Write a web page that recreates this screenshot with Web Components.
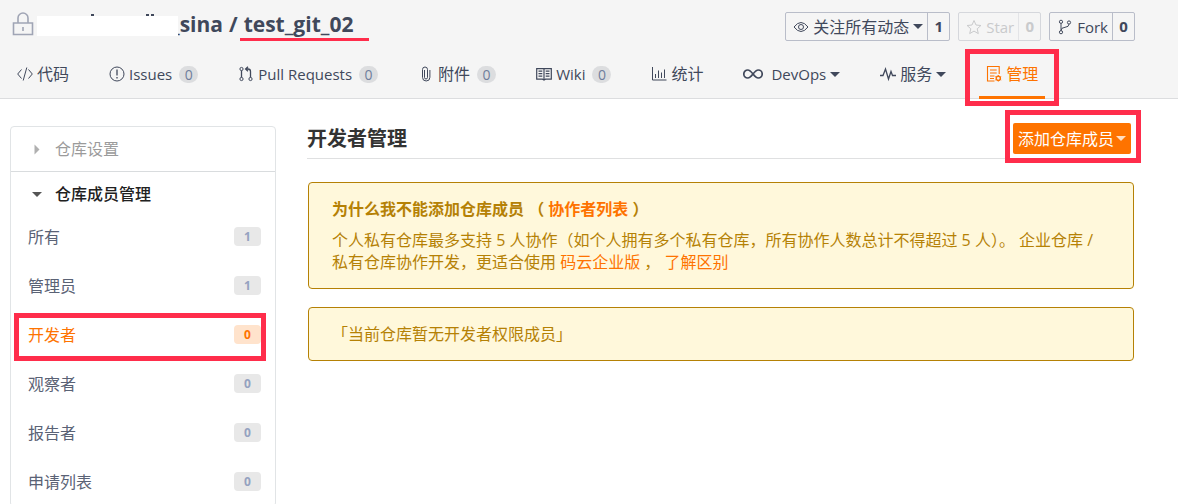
<!DOCTYPE html>
<html lang="zh-CN">
<head>
<meta charset="utf-8">
<title>test_git_02 - 开发者管理</title>
<style>
  body {
    margin: 0;
    height: 100vh;
    overflow: hidden;
    background: #fff;
    color: #40485b;
    font: 16px/22px "Open Sans", "Noto Sans CJK SC", sans-serif;
  }

  a {
    color: #fe7300;
    text-decoration: none;
  }

  p {
    margin: 0;
  }
</style>
</head>
<body>
  <repo-page>
    <repo-header slot="header">
      <repo-title slot="title" owner="_sina" name="test_git_02"></repo-title>
      <repo-action slot="actions" icon="eye" count="1" menu>关注所有动态</repo-action>
      <repo-action slot="actions" icon="star" count="0" lang="en" disabled>Star</repo-action>
      <repo-action slot="actions" icon="fork" count="0" lang="en">Fork</repo-action>
      <nav-tab icon="code">代码</nav-tab>
      <nav-tab icon="issue" count="0" lang="en">Issues</nav-tab>
      <nav-tab icon="pull" count="0" lang="en">Pull Requests</nav-tab>
      <nav-tab icon="clip" count="0">附件</nav-tab>
      <nav-tab icon="book" count="0" lang="en">Wiki</nav-tab>
      <nav-tab icon="chart">统计</nav-tab>
      <nav-tab icon="infinity" lang="en" menu>DevOps</nav-tab>
      <nav-tab icon="pulse" menu>服务</nav-tab>
      <nav-tab icon="manage" active>管理</nav-tab>
    </repo-header>

    <side-menu slot="side">
      <side-heading>仓库设置</side-heading>
      <side-heading open>仓库成员管理</side-heading>
      <side-item count="1">所有</side-item>
      <side-item count="1">管理员</side-item>
      <side-item count="0" active>开发者</side-item>
      <side-item count="0">观察者</side-item>
      <side-item count="0">报告者</side-item>
      <side-item count="0">申请列表</side-item>
    </side-menu>

    <page-heading>开发者管理<add-button slot="action">添加仓库成员</add-button></page-heading>
    <notice-box>
      <span slot="title">为什么我不能添加仓库成员 （ <a href="#">协作者列表</a> ）</span>
      <p>
        <span>个人私有仓库最多支持 5 人协作（如个人拥有多个私有仓库，所有协作人数总计不得超过 5 人）。 企业仓库 /</span>
        <span>私有仓库协作开发，更适合使用</span>
        <a href="#">码云企业版</a> ， <a href="#">了解区别</a>
      </p>
    </notice-box>
    <notice-box>
      <p>「当前仓库暂无开发者权限成员」</p>
    </notice-box>
  </repo-page>

<script>
  const icons = {
    lock: ['0 0 22 24', '<path d="M6 11V6a5 5 0 0 1 10 0v5M1.5 11h19v11.5h-19zM11 15v4" stroke="#a0a5b5" stroke-width="1.6"/>'],
    code: ['0 0 16 16', '<path d="M4.5 3.5.7 8l3.8 4.5M11.5 3.5 15.3 8l-3.8 4.5M9.8 1.5 6.2 14.5"/>'],
    issue: ['0 0 16 16', '<circle cx="8" cy="8" r="7"/><path d="M8 3.5v6M8 11v1.5" stroke-width="1.3"/>'],
    pull: ['0 0 16 16', '<circle cx="3.5" cy="3" r="1.6"/><circle cx="3.5" cy="13" r="1.6"/><circle cx="12.5" cy="13" r="1.6"/><path d="M3.5 4.6v6.8M12.5 11.4V5.5q0-2.5-2.5-2.5H8M10 .8 7.6 3 10 5.2" stroke-width="1.3"/>'],
    clip: ['0 0 16 16', '<path d="M6.5 4v7.5a1.5 1.5 0 0 0 3 0V3.5a2.5 2.5 0 0 0-5 0v7.8a3.7 3.7 0 0 0 7.4 0V4"/>'],
    book: ['0 0 16 16', '<path d="M.7 2.6h14.6v10.6H9.5L8 14l-1.5-.8H.7zM8 2.6V14M2.5 5.2h3.8M2.5 7.7h3.8M2.5 10.2h3.8M9.7 5.2h3.8M9.7 7.7h3.8M9.7 10.2h3.8" stroke-width="1.2"/>'],
    chart: ['0 0 16 16', '<path d="M1.5 1v13h14M4.5 12V8M7.5 12V4.5M10.5 12V6.5M13.5 12V3.5"/>'],
    infinity: ['0 0 20 16', '<path d="M10 8C7.5 4.8 6.5 4 4.8 4a4 4 0 0 0 0 8C6.5 12 7.5 11.2 10 8s3.5-4 5.2-4a4 4 0 0 1 0 8C13.5 12 12.5 11.2 10 8z" stroke-width="1.7"/>'],
    pulse: ['0 0 16 16', '<path d="M0 9.5h3L5.5 3l3 10L11 5.5l1.5 4H16" stroke-width="1.3"/>'],
    manage: ['0 0 16 16', '<path d="M8.5 15h-7V.5h11.7V8M4 4h6.7M4 7h6.7M4 10h4.5M4 12.5h4" stroke-width="1.1"/><circle cx="12.3" cy="12.3" r="2.1" stroke-width="1.4"/><path d="M12.3 9v1M12.3 14.6v1M9.4 10.6l.9.5M14.3 13.5l.9.5M9.4 14l.9-.5M14.3 11.1l.9-.5"/>'],
    eye: ['0 0 16 16', '<path d="M1 8q7-9 14 0-7 9-14 0z"/><circle cx="8" cy="8" r="2.5"/>'],
    star: ['0 0 16 16', '<path d="m8 1.500 2 4.500 4.900.5-3.700 3.300 1.100 4.800L8 12.100l-4.300 2.500 1.100-4.800L1.100 6.500 6 6z"/>'],
    fork: ['0 0 16 16', '<circle cx="4" cy="2.8" r="1.6"/><circle cx="12" cy="3.5" r="1.6"/><circle cx="4" cy="13.2" r="1.6"/><path d="M4 4.4v7.2M12 5.1Q12 8 8 8.3T4 11.5"/>']
  };

  // Small helper: fill an open shadow root from a string
  function paint(element, html) {
    element.attachShadow({ mode: 'open' }).innerHTML = html;
  }

  class UiIcon extends HTMLElement {
    connectedCallback() {
      const [box, shapes] = icons[this.getAttribute('name')];
      const [, , width, height] = box.split(' ');
      paint(this, `
        <style>
          :host { display: block; flex: none; }
          :host([name="infinity"]) { margin-right: 4px; }
          svg { display: block; }
        </style>
        <svg width="${width}" height="${height}" viewBox="${box}" fill="none" stroke="currentColor" aria-hidden="true">${shapes}</svg>
      `);
    }
  }

  class DropCaret extends HTMLElement {
    connectedCallback() {
      paint(this, `
        <style>
          :host {
            display: block;
            flex: none;
            border: 5px solid transparent;
            border-top-color: currentColor;
            border-bottom: 0;
          }
        </style>
      `);
    }
  }

  // Red frame drawn around whatever it wraps
  class MarkFrame extends HTMLElement {
    connectedCallback() {
      paint(this, `
        <style>
          :host { display: block; position: relative; }
          div {
            position: absolute;
            inset: var(--frame-inset, -8px);
            border: 5px solid #ff2d4b;
            pointer-events: none;
          }
        </style>
        <slot></slot>
        <div></div>
      `);
    }
  }

  class RepoPage extends HTMLElement {
    connectedCallback() {
      paint(this, `
        <style>
          :host { display: block; }
          .content {
            display: grid;
            grid-template-columns: 266px minmax(0, 1fr);
            gap: 31px;
            padding: 0 43px 0 10px;
          }
          aside { padding-top: 27px; }
        </style>
        <slot name="header"></slot>
        <div class="content">
          <aside><slot name="side"></slot></aside>
          <main><slot></slot></main>
        </div>
      `);
    }
  }

  class RepoHeader extends HTMLElement {
    connectedCallback() {
      paint(this, `
        <style>
          :host {
            display: block;
            background: #f5f5f5;
            border-bottom: 1px solid #dcdddf;
          }
          .top {
            display: flex;
            justify-content: space-between;
            height: 50px;
            padding: 0 43px 0 12px;
          }
          .actions {
            display: flex;
            align-items: flex-start;
            gap: 8px;
            padding-top: 12px;
          }
          nav {
            display: flex;
            gap: 40px;
            height: 48px;
            padding: 0 17px;
          }
        </style>
        <div class="top">
          <slot name="title"></slot>
          <div class="actions"><slot name="actions"></slot></div>
        </div>
        <nav><slot></slot></nav>
      `);
    }
  }

  class RepoTitle extends HTMLElement {
    connectedCallback() {
      paint(this, `
        <style>
          :host {
            display: flex;
            align-items: center;
            gap: 3px;
            height: 47px;
          }
          h1 {
            display: flex;
            align-items: center;
            margin: 0;
            font-size: 21px;
            line-height: 30px;
          }
          a { color: inherit; text-decoration: none; }
          .owner { display: flex; align-items: center; }
          /* the cover hides the start of the owner's name */
          .owner svg { z-index: 1; margin-right: -7px; }
          .slash { padding: 0 6px; }
          .name { position: relative; }
          .name::after {
            content: "";
            position: absolute;
            left: -4px;
            right: -16px;
            bottom: -2px;
            height: 3px;
            background: #ff2d4b;
          }
        </style>
        <ui-icon name="lock"></ui-icon>
        <h1>
          <a class="owner" href="#">
            <svg width="141" height="24" aria-hidden="true">
              <path fill="#fff" d="M0 4h141v20H0z"/>
              <path fill="#40485b" d="M54 2h3v2h-3zM109 2h3v2h-3zM114 2h3v2h-3z"/>
            </svg>
            ${this.getAttribute('owner')}
          </a>
          <span class="slash">/</span>
          <a class="name" href="#">${this.getAttribute('name')}</a>
        </h1>
      `);
    }
  }

  class RepoAction extends HTMLElement {
    connectedCallback() {
      const off = this.hasAttribute('disabled');
      paint(this, `
        <style>
          :host {
            display: flex;
            box-sizing: border-box;
            height: 29px;
            border: 1px solid ${off ? '#d5d7dc' : '#b9bdc9'};
            border-radius: 2px;
            color: ${off ? '#c9cacc' : '#40485b'};
          }
          :host(:lang(en)) { font-size: 15px; }
          button {
            display: flex;
            align-items: center;
            gap: 4px;
            padding: 0 4px 0 7px;
            border: 0;
            background: none;
            color: inherit;
            font: inherit;
          }
          a {
            box-sizing: border-box;
            min-width: 22px;
            border-left: 1px solid ${off ? '#e3e4e7' : '#b9bdc9'};
            color: inherit;
            font-size: 15px;
            font-weight: bold;
            line-height: 27px;
            text-align: center;
            text-decoration: none;
          }
        </style>
        <button type="button" ${off ? 'disabled' : ''}>
          <ui-icon name="${this.getAttribute('icon')}"></ui-icon>
          <slot></slot>
          ${this.hasAttribute('menu') ? '<drop-caret></drop-caret>' : ''}
        </button>
        <a href="#">${this.getAttribute('count')}</a>
      `);
    }
  }

  class NavTab extends HTMLElement {
    connectedCallback() {
      const count = this.getAttribute('count');
      const active = this.hasAttribute('active');
      const link = `
        <a href="#" ${active ? 'class="active" aria-current="page"' : ''}>
          <ui-icon name="${this.getAttribute('icon')}"></ui-icon>
          <slot></slot>
          ${count ? `<span class="count">${count}</span>` : ''}
          ${this.hasAttribute('menu') ? '<drop-caret></drop-caret>' : ''}
        </a>`;
      paint(this, `
        <style>
          :host { display: block; white-space: nowrap; }
          :host(:lang(en)) { font-size: 15px; }
          a {
            display: flex;
            align-items: center;
            gap: 4px;
            height: 48px;
            color: #40485b;
            text-decoration: none;
          }
          mark-frame { --frame-inset: -1px -21px -8px -21px; }
          .active {
            position: relative;
            color: #fe7300;
          }
          .active::after {
            content: "";
            position: absolute;
            left: -7px;
            right: -7px;
            bottom: -1px;
            height: 3px;
            background: #fe7300;
          }
          .count {
            min-width: 19px;
            margin-left: 3px;
            border-radius: 9px;
            background: #dcdddf;
            color: #6f7d9c;
            font-size: 14px;
            line-height: 17px;
            text-align: center;
          }
        </style>
        ${active ? `<mark-frame>${link}</mark-frame>` : link}
      `);
    }
  }

  class SideMenu extends HTMLElement {
    connectedCallback() {
      paint(this, `
        <style>
          :host {
            display: block;
            border: 1px solid #e1e4e6;
            border-radius: 4px;
          }
        </style>
        <nav><slot></slot></nav>
      `);
    }
  }

  class SideHeading extends HTMLElement {
    connectedCallback() {
      const open = this.hasAttribute('open');
      paint(this, `
        <style>
          :host { display: block; }
          :host(:not([open])) { border-bottom: 1px solid #d9dcde; }
          button {
            display: flex;
            align-items: center;
            gap: 13px;
            width: 100%;
            height: 44px;
            padding: 0 21px;
            border: 0;
            background: none;
            color: #9b9b9b;
            font: inherit;
          }
          :host([open]) button {
            height: 40px;
            padding-top: 4px;
            color: #212121;
            font-weight: 500;
          }
          drop-caret { color: #555; }
          :host(:not([open])) drop-caret {
            color: #b0b0b0;
            transform: rotate(-90deg);
          }
        </style>
        <button type="button" aria-expanded="${open}">
          <drop-caret></drop-caret>
          <slot></slot>
        </button>
      `);
    }
  }

  class SideItem extends HTMLElement {
    connectedCallback() {
      const active = this.hasAttribute('active');
      const link = `
        <a href="#" ${active ? 'aria-current="page"' : ''}>
          <slot></slot>
          <span>${this.getAttribute('count')}</span>
        </a>`;
      paint(this, `
        <style>
          :host { display: block; color: #5a6275; }
          :host([active]) { color: #fe7300; }
          mark-frame { --frame-inset: 3px 9px -2px 3px; }
          a {
            display: flex;
            align-items: center;
            justify-content: space-between;
            height: 49px;
            padding: 0 14px 0 17px;
            color: inherit;
            text-decoration: none;
          }
          span {
            width: 27px;
            border-radius: 4px;
            background: #e8e8e8;
            color: #95a2c0;
            font-size: 12px;
            font-weight: bold;
            line-height: 19px;
            text-align: center;
          }
          :host([active]) span {
            background: #ffe3cc;
            color: #fe7300;
          }
        </style>
        ${active ? `<mark-frame>${link}</mark-frame>` : link}
      `);
    }
  }

  class PageHeading extends HTMLElement {
    connectedCallback() {
      paint(this, `
        <style>
          :host {
            display: flex;
            align-items: flex-end;
            justify-content: space-between;
            margin-bottom: 23px;
            padding: 24px 4px 4px 0;
            border-bottom: 1px solid #dfe0e1;
          }
          h2 {
            margin: 0;
            color: #333;
            font-size: 20px;
            line-height: 31px;
          }
        </style>
        <h2><slot></slot></h2>
        <slot name="action"></slot>
      `);
    }
  }

  class AddButton extends HTMLElement {
    connectedCallback() {
      paint(this, `
        <style>
          :host { display: block; }
          mark-frame { --frame-inset: -13px -10px -9px -8px; }
          button {
            display: flex;
            align-items: center;
            gap: 2px;
            height: 31px;
            padding: 0 5px;
            border: 0;
            border-radius: 2px;
            background: #fe7300;
            color: #fff;
            font: inherit;
          }
          drop-caret { color: #ffdfc4; }
        </style>
        <mark-frame>
          <button type="button"><slot></slot><drop-caret></drop-caret></button>
        </mark-frame>
      `);
    }
  }

  class NoticeBox extends HTMLElement {
    connectedCallback() {
      paint(this, `
        <style>
          :host {
            display: block;
            margin: 0 1px 18px;
            padding: 15px 23px;
            border: 1px solid #b58105;
            border-radius: 4px;
            background: #fff8db;
            color: #b58105;
          }
          ::slotted([slot="title"]) {
            display: block;
            margin-bottom: 9px;
            font-weight: bold;
          }
        </style>
        <slot name="title"></slot>
        <slot></slot>
      `);
    }
  }

  customElements.define('ui-icon', UiIcon);
  customElements.define('drop-caret', DropCaret);
  customElements.define('mark-frame', MarkFrame);
  customElements.define('repo-page', RepoPage);
  customElements.define('repo-header', RepoHeader);
  customElements.define('repo-title', RepoTitle);
  customElements.define('repo-action', RepoAction);
  customElements.define('nav-tab', NavTab);
  customElements.define('side-menu', SideMenu);
  customElements.define('side-heading', SideHeading);
  customElements.define('side-item', SideItem);
  customElements.define('page-heading', PageHeading);
  customElements.define('add-button', AddButton);
  customElements.define('notice-box', NoticeBox);
</script>
</body>
</html>
